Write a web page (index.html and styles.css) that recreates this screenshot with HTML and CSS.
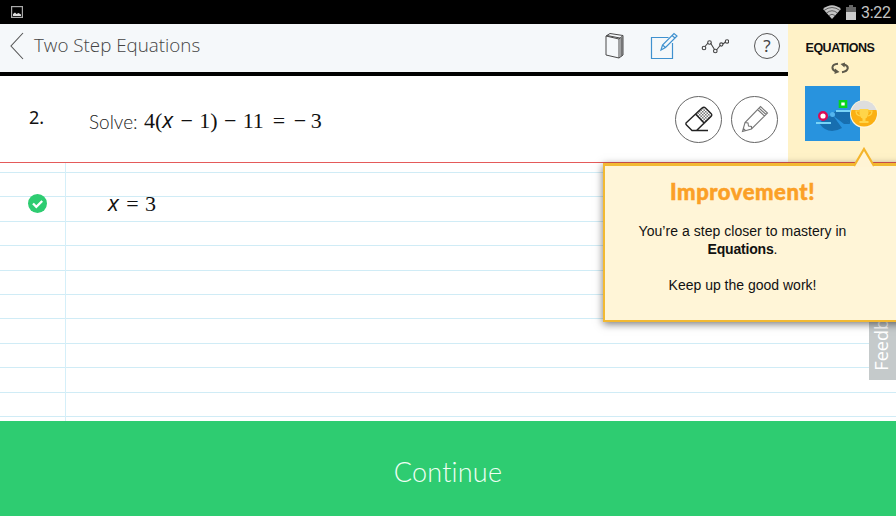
FILE: index.html
```html
<!DOCTYPE html>
<html lang="en">
<head>
<meta charset="utf-8">
<title>Two Step Equations</title>
<link rel="stylesheet" href="styles.css">
</head>
<body>
<div class="status">
  <svg class="photo" width="12" height="12" viewBox="0 0 12 12"><rect x=".6" y=".6" width="10.8" height="10.8" fill="none" stroke="#aaa" stroke-width="1.2"/><path d="M2 10V8l2-1.5L5.5 8 7.5 7 10 8.500V10z" fill="#ddd"/></svg>
  <div class="tray">
    <svg width="18" height="14" viewBox="0 0 18 14"><path d="M0 4Q9-3.500 18 4L9 14z" fill="#c4c4c4"/><path d="M1 5.500Q9-.5 17 5.500M3.500 8Q9 3.500 14.500 8M6 10.500Q9 8 12 10.500" fill="none" stroke="#444" stroke-width=".8"/></svg>
    <svg width="10" height="15" viewBox="0 0 10 15"><path d="M3 0h4v2h3v13H0V2h3z" fill="#666"/><path d="M0 7h10v8H0z" fill="#ccc"/></svg>
    <span class="clock">3:22</span>
  </div>
</div>
<div class="top">
  <div class="main">
    <header class="nav">
      <svg class="back" width="14" height="28" viewBox="0 0 14 28"><path d="M13 1 1 14l12 13" fill="none" stroke="#555" stroke-width="1.1"/></svg>
      <h1>Two Step Equations</h1>
      <div class="tools">
        <svg width="22" height="28" viewBox="0 0 22 28" fill="none" stroke="#4a4a4a" stroke-width="1"><path d="M2 4l13 3v19L2 23zM2 4l4-2.500 13 2V23l-4 3M15 7l4-3.500M3 3.500l13 2.500M17 6v18.500M18 5v18.500"/></svg>
        <svg width="28" height="28" viewBox="0 0 28 28" fill="none" stroke="#3f91cf" stroke-width="1.2"><path d="M18.500 5.500H1.500v21h21V11M11 18l1.500-5L24 1.500 27 4 15.500 15.500zM12.500 13l3 2.500M22 3.500l3 2.500"/></svg>
        <svg width="28" height="28" viewBox="0 0 28 28" fill="none" stroke="#444" stroke-width="1.1"><path d="M4 14.500 7 11M9.500 11l4 6.500M15.500 18l4-5M22 12l2.500-2"/><circle cx="3" cy="16" r="1.800"/><circle cx="8.500" cy="10.500" r="1.800"/><circle cx="14.300" cy="19" r="1.800"/><circle cx="20.300" cy="12.500" r="1.600"/><circle cx="26" cy="9.500" r="1.700"/></svg>
        <span class="help">?</span>
      </div>
    </header>
    <section class="question">
      <span class="num">2.</span>
      <span class="solve">Solve:</span>
      <span class="math expr">4(<i>x</i><span class="op">−</span>1)<span class="op">−</span>11<span class="op eq">=</span><span class="neg">−</span>3</span>
      <div class="pens">
        <span class="round"><svg width="30" height="28" viewBox="0 0 30 28"><defs><pattern id="dots" width="3" height="3" patternUnits="userSpaceOnUse"><path d="M0 0h1.500v1.500H0zM1.500 1.500H3V3H1.500z" fill="#777"/></pattern></defs><path d="M11.500 9 19 2 28 11 20 19.500z" fill="url(#dots)"/><path d="M2 18 18 3Q20 1.500 21.500 3L27 8.500Q28.500 10 27 11.500L12.500 25.500H8L2.500 20Q1.500 19 2 18zM11.500 9l9 9.500M8 25.500h16" fill="none" stroke="#222" stroke-width="1.400"/></svg></span>
        <span class="round"><svg width="28" height="28" viewBox="0 0 28 28" fill="none" stroke="#777" stroke-width="1.100"><path d="M1.500 26.500 4 17.500 19.500 1.500l7 6.500-16 16zM4 17.500l3 .5.500 3 3 .5v2.500M16.500 4.500l7 6.500M18 3l7 6.500M1.500 26.500l1-3 2 2z"/></svg></span>
      </div>
    </section>
  </div>
  <aside class="side">
    <span class="topic">EQUATIONS</span>
    <svg class="cycle" width="18" height="12" viewBox="0 0 18 12"><path d="M7 1.800C0 2.500 0 7.500 5 9.500M11 10.200C18 9 18.500 4 13 2.500" fill="none" stroke="#5d594a" stroke-width="2"/><path d="M4 6.500 8.500 10 3.500 12zM14 .5 9.500 2 13.500 5.500z" fill="#5d594a"/></svg>
    <div class="badge">
      <svg width="55" height="55" viewBox="0 0 55 55"><path fill="#2893de" d="M0 0h55v55H0z"/><path d="M14 37 27 28 37 42Q23 50 14 37zM31 26h14v12z" fill="#176eaf"/><path d="m26 28 5-3 14 13-6 0z" fill="#176eaf"/><path d="M11 37h15M31 25h14" stroke="#78d3f7" stroke-width="2"/><circle cx="27.500" cy="28.500" r="2.500" fill="#53b5ee"/><circle cx="18" cy="30" r="3.800" fill="#fff" stroke="#da0b55" stroke-width="2.400"/><path d="M35 15.300h6v5.500h-6z" fill="#fff" stroke="#08d51b" stroke-width="2.600"/></svg>
      <svg class="trophy" width="28" height="28" viewBox="0 0 28 28"><circle cx="14" cy="14" r="14" fill="#fff6d8"/><path d="M1.500 10a13 13 0 0 1 25 0z" fill="#dedede"/><path d="M1.500 10a13 13 0 1 0 25 0z" fill="#fbb012"/><path d="M9.500 9h9v4q-1 5-3 5.500V21h3v2h-9v-2h3v-2.500Q10 18 9.500 13z" fill="#ffd54a"/><path d="M9 11H6q0 4 4 5M19 11h3q0 4-4 5" fill="none" stroke="#ffd54a" stroke-width="1.200"/></svg>
    </div>
  </aside>
</div>
<main class="paper">
  <svg class="check" width="19" height="19" viewBox="0 0 19 19"><circle cx="9.500" cy="9.500" r="9.500" fill="#2ecc71"/><path d="m5 9.500 3.300 3.300L14.200 7" fill="none" stroke="#fff" stroke-width="2.300"/></svg>
  <span class="math answer"><i>x</i><span class="op eq2">=</span>3</span>
  <div class="feedback"><span>Feedback</span></div>
  <div class="popover">
    <svg class="arrow" width="22" height="20" viewBox="0 0 22 20"><path d="M1 19 11 1l10 18v1H1z" fill="#fff4d5"/><path d="M1 19 11 2l10 17" fill="none" stroke="#f4b52c" stroke-width="2.200"/></svg>
    <h2>Improvement!</h2>
    <p class="l1">You’re a step closer to mastery in</p>
    <p class="l2"><b>Equations</b>.</p>
    <p class="l3">Keep up the good work!</p>
  </div>
</main>
<button class="continue"><span>Continue</span></button>
</body>
</html>
```
FILE: styles.css
```css
* { box-sizing: border-box; }
body { margin: 0; width: 896px; height: 516px; overflow: hidden; display: flex; flex-direction: column; background: #fff; font-family: "Liberation Sans", sans-serif; color: #111; }
svg { display: block; flex: none; }
h1, h2, p { margin: 0; font-weight: 400; white-space: nowrap; }
.status { height: 24px; flex: none; background: #000; display: flex; justify-content: space-between; align-items: center; padding: 0 7px 0 11px; }
.tray { display: flex; align-items: center; gap: 5px; }
.clock { font: 16px/20px Roboto, sans-serif; color: #c4c4c4; width: 28px; white-space: nowrap; letter-spacing: -.3px; padding-top: 1px; }
.top { height: 139px; flex: none; display: flex; border-bottom: 1px solid #e45a5a; }
.main { width: 788px; }
.nav { height: 52px; background: #f5f8fa; border-bottom: 4px solid #000; display: flex; align-items: center; padding: 0 8px 4px 10px; }
.nav h1 { font: 300 18.8px/24px "Open Sans", sans-serif; color: #444; margin-left: 10px; padding-bottom: 2px; }
.tools { margin-left: auto; display: flex; align-items: center; }
.tools svg:nth-child(2) { margin-left: 24px; }
.tools svg:nth-child(3) { margin-left: 23px; }
.help { width: 26px; height: 26px; border: 1px solid #555; border-radius: 50%; margin-left: 25px; text-align: center; font: 17px/24px "Noto Sans", sans-serif; color: #444; }
.question { height: 86px; display: flex; align-items: center; padding: 0 10px 0 29px; white-space: nowrap; }
.num { font: 18px/24px "Noto Sans", sans-serif; width: 60px; padding-bottom: 5px; }
.solve { font: 300 19px/24px Lato, sans-serif; width: 55px; padding-top: 5px; color: #222; }
.math { font: 22px/28px "Liberation Serif", serif; white-space: nowrap; }
.math i { font-family: "Open Sans", sans-serif; font-size: 22.5px; display: inline-block; width: 12px; }
.op { display: inline-block; width: 25px; text-align: center; }
.eq { width: 30px; }
.eq2 { width: 25px; }
.neg { display: inline-block; width: 17px; }
.expr { padding-top: 3px; }
.pens { margin-left: auto; display: flex; gap: 9px; }
.round { width: 47px; height: 47px; border: 1px solid #666; border-radius: 50%; display: flex; align-items: center; justify-content: center; }
.side { width: 108px; background: #fff2c7; display: flex; flex-direction: column; align-items: center; padding-top: 15px; }
.topic { font: bold 12.5px/18px "Liberation Sans", sans-serif; padding-right: 4px; letter-spacing: -.5px; }
.cycle { margin: 5px 4px 0 0; }
.badge { position: relative; margin: 12px 19px 0 0; }
.trophy { position: absolute; left: 45px; top: 14px; }
.paper { height: 258px; flex: none; position: relative; display: flex; align-items: flex-start; padding: 31px 0 0 28px; background: linear-gradient(90deg, transparent 65px, #d5eff9 65px, #d5eff9 66px, transparent 66px), repeating-linear-gradient(180deg, transparent 0 9px, #d0ecf6 9px 10px, transparent 10px 24.4px); }
.answer { margin-left: 61px; margin-top: -5px; }
.feedback { position: absolute; left: 869px; top: 130px; width: 27px; height: 87px; background: #c5cacb; color: #fff; overflow: hidden; }
.feedback span { position: absolute; left: 1px; bottom: 9px; writing-mode: vertical-rl; transform: rotate(180deg); font: 18px/22px "Open Sans", sans-serif; }
.popover { position: absolute; left: 603px; top: 0; width: 310px; height: 159px; background: #fff5d7; border: 3px solid #f2b932; border-left-width: 2px; border-bottom-width: 2px; box-shadow: 0 2px 8px #0008; padding: 13px 30px 0 0; text-align: center; }
.arrow { position: absolute; left: 248px; top: -19px; }
.popover h2 { font: 900 22px/26px Lato, sans-serif; color: #fba026; letter-spacing: .55px; -webkit-text-stroke: .5px #fba026; }
.popover p { font-size: 14px; line-height: 18px; }
.popover .l1 { margin-top: 17px; letter-spacing: .04px; }
.popover b { letter-spacing: -.2px; }
.popover .l3 { margin-top: 18px; }
.continue { height: 95px; width: 100%; flex: none; border: 0; padding: 7px 0 0; background: #2ecc71; color: #f0fff5; font: 300 27px/36px Lato, sans-serif; font-variant-ligatures: none; letter-spacing: .2px; }
```
